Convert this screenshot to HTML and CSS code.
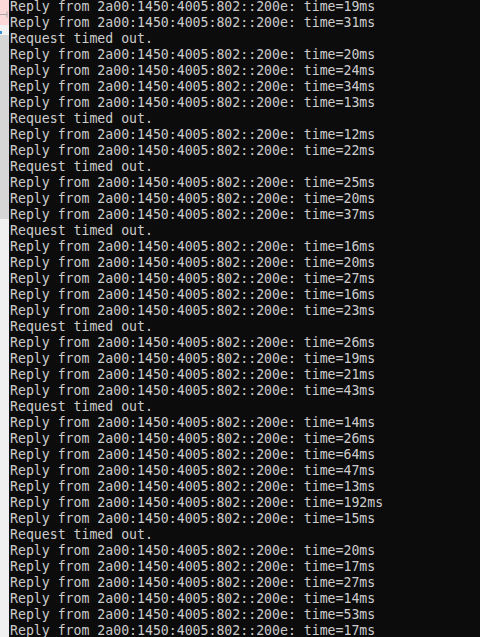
FILE: index.html
```html
<!DOCTYPE html>
<html>
<head>
<meta charset="utf-8">
<link rel="stylesheet" href="styles.css">
</head>
<body>
<div class="app">
  <div class="gutter">
    <div class="g-pink">
      <svg class="g-arrow" width="9" height="7" viewBox="0 0 9 7"><path d="M0 3.5H7M7 0.5V6.5" stroke="#a9a9a9" stroke-width="1" fill="none"/></svg>
    </div>
    <div class="g-light"><span class="g-tick"></span></div>
    <div class="g-gray"></div>
    <div class="g-rest"></div>
  </div>
  <pre class="console">Reply from 2a00:1450:4005:802::200e: time=19ms
Reply from 2a00:1450:4005:802::200e: time=31ms
Request timed out.
Reply from 2a00:1450:4005:802::200e: time=20ms
Reply from 2a00:1450:4005:802::200e: time=24ms
Reply from 2a00:1450:4005:802::200e: time=34ms
Reply from 2a00:1450:4005:802::200e: time=13ms
Request timed out.
Reply from 2a00:1450:4005:802::200e: time=12ms
Reply from 2a00:1450:4005:802::200e: time=22ms
Request timed out.
Reply from 2a00:1450:4005:802::200e: time=25ms
Reply from 2a00:1450:4005:802::200e: time=20ms
Reply from 2a00:1450:4005:802::200e: time=37ms
Request timed out.
Reply from 2a00:1450:4005:802::200e: time=16ms
Reply from 2a00:1450:4005:802::200e: time=20ms
Reply from 2a00:1450:4005:802::200e: time=27ms
Reply from 2a00:1450:4005:802::200e: time=16ms
Reply from 2a00:1450:4005:802::200e: time=23ms
Request timed out.
Reply from 2a00:1450:4005:802::200e: time=26ms
Reply from 2a00:1450:4005:802::200e: time=19ms
Reply from 2a00:1450:4005:802::200e: time=21ms
Reply from 2a00:1450:4005:802::200e: time=43ms
Request timed out.
Reply from 2a00:1450:4005:802::200e: time=14ms
Reply from 2a00:1450:4005:802::200e: time=26ms
Reply from 2a00:1450:4005:802::200e: time=64ms
Reply from 2a00:1450:4005:802::200e: time=47ms
Reply from 2a00:1450:4005:802::200e: time=13ms
Reply from 2a00:1450:4005:802::200e: time=192ms
Reply from 2a00:1450:4005:802::200e: time=15ms
Request timed out.
Reply from 2a00:1450:4005:802::200e: time=20ms
Reply from 2a00:1450:4005:802::200e: time=17ms
Reply from 2a00:1450:4005:802::200e: time=27ms
Reply from 2a00:1450:4005:802::200e: time=14ms
Reply from 2a00:1450:4005:802::200e: time=53ms
Reply from 2a00:1450:4005:802::200e: time=17ms</pre>
</div>
</body>
</html>
```
FILE: styles.css
```css
html, body {
  margin: 0;
  padding: 0;
  width: 480px;
  height: 637px;
  overflow: hidden;
  background: #0c0c0c;
}
.app {
  display: flex;
  width: 480px;
  height: 637px;
}
.gutter {
  width: 9px;
  flex: 0 0 9px;
  display: flex;
  flex-direction: column;
}
.g-pink {
  height: 25px;
  background: #fcd9d9;
  display: flex;
  align-items: center;
}
.g-arrow {
  display: block;
  margin-top: 3px;
}
.g-light {
  height: 10px;
  background: #f2f2f2;
  position: relative;
}
.g-tick {
  position: absolute;
  left: 0;
  top: 6px;
  width: 2px;
  height: 3px;
  background: #3d8fd8;
}
.g-gray {
  height: 184px;
  background: #d6d6d6;
}
.g-rest {
  flex: 1;
  background: #f0f0f0;
}
.console {
  margin: -1px 0 0 0;
  padding: 0 0 0 1px;
  flex: 1;
  font-family: "DejaVu Sans Mono", "Liberation Mono", monospace;
  font-size: 13.2px;
  line-height: 16px;
  color: #cccccc;
  white-space: pre;
}
```
